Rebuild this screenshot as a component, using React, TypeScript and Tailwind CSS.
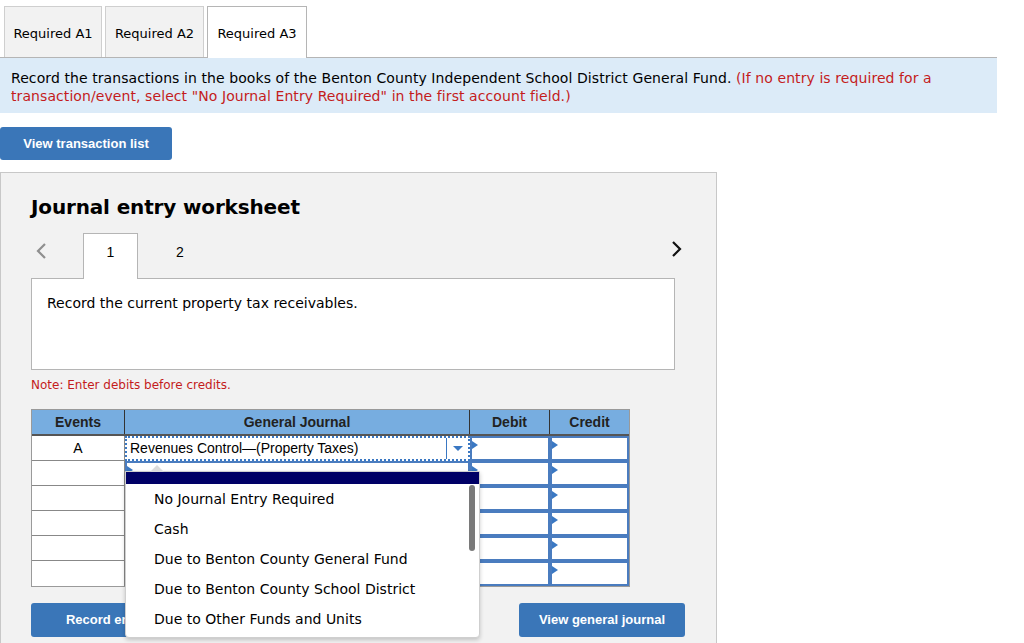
import React from "react";

const verdana = { fontFamily: '"DejaVu Sans", Verdana, sans-serif' };
const arial = { fontFamily: '"Liberation Sans", Arial, sans-serif' };

function Marker() {
  return (
    <span className="absolute left-0 top-[3px] w-0 h-0 border-t-[4px] border-b-[4px] border-l-[6px] border-t-transparent border-b-transparent border-l-[#3a78c3]" />
  );
}

function Cell({ w, marker = true }: { w: string; marker?: boolean }) {
  return (
    <div className={`relative ${w} h-full border-2 border-[#4a7cbf] bg-white`}>
      {marker && <Marker />}
    </div>
  );
}

export default function App() {
  const rows = [0, 1, 2, 3, 4, 5];
  const items = [
    "No Journal Entry Required",
    "Cash",
    "Due to Benton County General Fund",
    "Due to Benton County School District",
    "Due to Other Funds and Units",
  ];
  return (
    <div className="w-[1024px] h-[643px] overflow-hidden bg-white relative text-black" style={verdana}>
      {/* Tabs */}
      <div className="flex items-end gap-[3px] pl-[4px] pt-[6px] w-[997px] border-b border-[#b5b5b5]">
        <div className="w-[98px] h-[51px] flex items-center justify-center pt-[3px] bg-[#f2f2f2] border border-[#cfcfcf] border-b-0 text-[13px]">Required A1</div>
        <div className="w-[99px] h-[51px] flex items-center justify-center pt-[3px] bg-[#f2f2f2] border border-[#cfcfcf] border-b-0 text-[13px]">Required A2</div>
        <div className="w-[100px] h-[52px] -mb-px flex items-center justify-center pt-[3px] bg-white border border-[#b5b5b5] border-b-0 text-[13px]">Required A3</div>
      </div>
      {/* Instructions */}
      <div className="w-[997px] bg-[#dcebf8] px-[11px] pt-[11px] pb-[8px] text-[14px] leading-[18px] tracking-[0.08px]">
        Record the transactions in the books of the Benton County Independent School District General Fund.{" "}
        <span className="text-[#c41c1c]">(If no entry is required for a transaction/event, select "No Journal Entry Required" in the first account field.)</span>
      </div>
      <div className="mt-[14px]">
        <button className="w-[172px] h-[33px] rounded-[3px] bg-[#3a76b8] text-white font-bold text-[13px]" style={arial}>
          View transaction list
        </button>
      </div>
      {/* Worksheet */}
      <div className="mt-[12px] w-[717px] h-[480px] bg-[#f2f2f2] border border-[#c8c8c8] pl-[30px] relative">
        <div className="pt-[20px] text-[20px] font-bold leading-[28px] tracking-[-0.15px]">Journal entry worksheet</div>
        <div className="flex items-start h-[46px] mt-[12px] relative">
          <div className="w-[52px] h-full pt-[9px] pl-[4px]">
            <svg width="12" height="18" viewBox="0 0 12 18"><path d="M10 2 L3 9 L10 16" fill="none" stroke="#8f8f8f" strokeWidth="2.2" /></svg>
          </div>
          <div className="w-[55px] h-[46px] bg-white border border-[#b5b5b5] border-b-0 flex justify-center pt-[8px] text-[14px] relative z-10" style={arial}>1</div>
          <div className="w-[84px] h-full flex justify-center pt-[9px] text-[14px]" style={arial}>2</div>
          <div className="absolute left-[640px] top-[7px]">
            <svg width="12" height="18" viewBox="0 0 12 18"><path d="M2 2 L9 9 L2 16" fill="none" stroke="#111" strokeWidth="2.2" /></svg>
          </div>
        </div>
        <div className="-mt-px w-[644px] h-[92px] bg-white border border-[#b5b5b5] px-[15px] pt-[14px] text-[14px]">
          Record the current property tax receivables.
        </div>
        <div className="mt-[8px] text-[12px] text-[#c41c1c] leading-[14px]">Note: Enter debits before credits.</div>
        {/* Table */}
        <div className="mt-[17px] w-[599px] border border-[#9a9a9a]" style={arial}>
          <div className="flex h-[26px] bg-[#77ade0] text-[14px] font-bold text-[#222] border-b-2 border-[#555]">
            <div className="w-[93px] flex items-center justify-center border-r border-[#333]">Events</div>
            <div className="w-[345px] flex items-center justify-center border-r border-[#333]">General Journal</div>
            <div className="w-[80px] flex items-center justify-center border-r border-[#333]">Debit</div>
            <div className="w-[79px] flex items-center justify-center">Credit</div>
          </div>
          {rows.map((r) => (
            <div key={r} className="flex h-[25px]">
              <div className={`w-[93px] h-full bg-white border-r border-[#888] ${r < 5 ? "border-b border-b-[#888]" : ""} flex items-center justify-center text-[14px]`}>
                {r === 0 ? "A" : ""}
              </div>
              {r === 0 ? (
                <div className="relative w-[345px] h-full bg-white border-2 border-dotted border-[#3a78c3] flex items-center">
                  <span className="pl-[3px] text-[14px] flex-1">Revenues Control—(Property Taxes)</span>
                  <span className="w-[22px] h-full border-l border-[#3a78c3] flex items-center justify-center">
                    <span className="w-0 h-0 border-l-[5px] border-r-[5px] border-t-[5px] border-l-transparent border-r-transparent border-t-[#3a78c3]" />
                  </span>
                </div>
              ) : (
                <Cell w="w-[345px]" />
              )}
              <Cell w="w-[80px]" />
              <Cell w="w-[79px]" />
            </div>
          ))}
        </div>
        <div className="flex justify-between w-[654px] mt-[16px]" style={arial}>
          <button className="w-[150px] h-[34px] rounded-[3px] bg-[#3a76b8] text-white font-bold text-[13px]">Record entry</button>
          <button className="w-[166px] h-[34px] rounded-[3px] bg-[#3a76b8] text-white font-bold text-[13px]">View general journal</button>
        </div>
      </div>
      {/* Dropdown menu */}
      <div className="absolute left-[125px] top-[471px] w-[355px] h-[167px] bg-white border border-[#cfcfcf] rounded-b-[4px] shadow-[0_2px_4px_rgba(0,0,0,0.2)]">
        <div className="absolute -top-[7px] left-[24px] w-0 h-0 border-l-[7px] border-r-[7px] border-b-[7px] border-l-transparent border-r-transparent border-b-[#dcdcdc]" />
        <div className="h-[12px] bg-[#000066]" />
        <div className="flex flex-col">
          {items.map((t) => (
            <div key={t} className="h-[30px] flex items-center pl-[28px] text-[14px]">{t}</div>
          ))}
        </div>
        <div className="absolute right-[4px] top-[13px] w-[6px] h-[66px] rounded-full bg-[#7a7a7a]" />
      </div>
    </div>
  );
}
